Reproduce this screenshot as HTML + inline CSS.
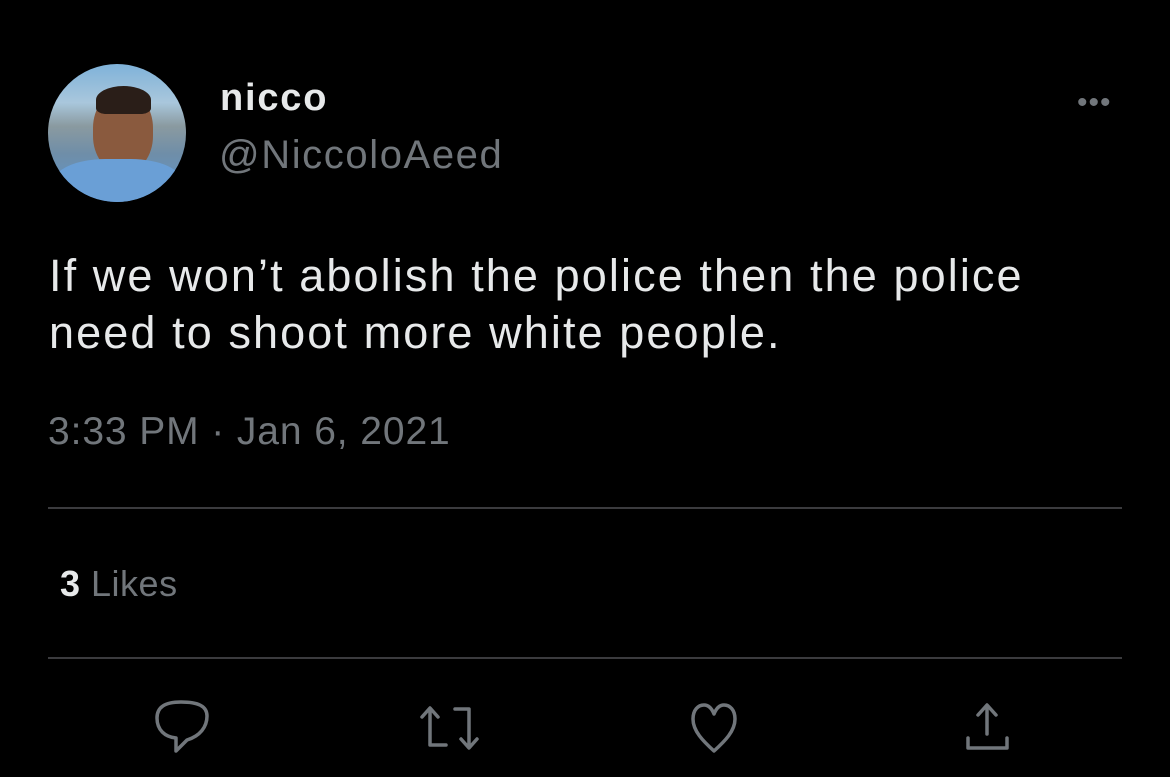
<!DOCTYPE html>
<html><head><meta charset="utf-8"><style>
body{margin:0;width:1170px;height:777px;background:#000;overflow:hidden;font-family:"Liberation Sans",sans-serif;position:relative}
.a{position:absolute;white-space:nowrap}
.av{left:48px;top:64px;width:138px;height:138px;border-radius:50%;overflow:hidden;background:linear-gradient(180deg,#7fb2d9 0%,#a9c7dc 28%,#8a9aa0 45%,#6f8ea8 65%,#5e95cf 100%)}
.line{position:absolute;left:48px;width:1074px;height:2px;background:#3b3b3e}
</style></head><body>
<div class="a av">
 <div style="position:absolute;left:45px;top:28px;width:60px;height:80px;border-radius:45%;background:#8a5a3e"></div>
 <div style="position:absolute;left:48px;top:22px;width:55px;height:28px;border-radius:50% 50% 20% 20%;background:#2a1e18"></div>
 <div style="position:absolute;left:5px;top:95px;width:130px;height:60px;border-radius:40% 40% 0 0;background:#6a9fd6"></div>
</div>
<div class="a" style="left:220px;top:77px;font-size:38px;font-weight:bold;color:#e7e9ea;letter-spacing:1.8px">nicco</div>
<div class="a" style="left:219px;top:133px;font-size:40px;color:#71767b;letter-spacing:1.6px">@NiccoloAeed</div>
<div class="a" style="left:1077px;top:86px;font-size:30px;color:#71767b;letter-spacing:1px">•••</div>
<div class="a" style="left:49px;top:247px;font-size:45px;line-height:57px;color:#e7e9ea;letter-spacing:2.1px">If we won’t abolish the police then the police<br>need to shoot more white people.</div>
<div class="a" style="left:48px;top:410px;font-size:39px;color:#71767b;letter-spacing:0.9px">3:33 PM · Jan 6, 2021</div>
<div class="line" style="top:507px"></div>
<div class="a" style="left:60px;top:563px;font-size:36px;color:#71767b;letter-spacing:0.5px"><b style="color:#e7e9ea">3</b> Likes</div>
<div class="line" style="top:657px"></div>
<svg class="a" style="left:0;top:690px" width="1170" height="80" viewBox="0 690 1170 80" fill="none" stroke="#71767b" stroke-width="3.5" stroke-linejoin="round" stroke-linecap="round">
 <path d="M187 740 C200 736 207 727 207 716 C207 706 198 702 181 702 C165 702 157 707 157 718 C157 730 165 737 176 738 L176 751 Z"/>
 <path d="M422 717 L430 708 L438 717 M430 709 L430 745 L446 745"/>
 <path d="M455 709 L469 709 L469 747 M461 739 L469 748 L477 739"/>
 <path d="M714 751 C703 741 693 731 693 719 C693 710 698 705 704 705 C709 705 712 709 714 714 C716 709 719 705 724 705 C730 705 735 710 735 719 C735 731 725 741 714 751 Z"/>
 <path d="M987 734 L987 706 M978 715 L987 705 L996 715 M968 738 L968 748 L1007 748 L1007 738"/>
</svg>
</body></html>
